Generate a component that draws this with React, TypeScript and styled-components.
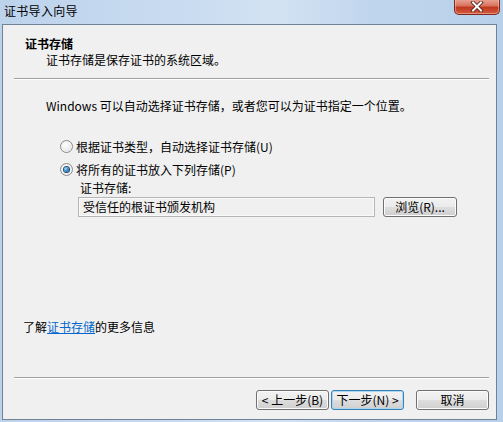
import styled, { createGlobalStyle } from 'styled-components';

const GlobalStyle = createGlobalStyle`
  html, body {
    margin: 0;
    padding: 0;
    background: #bcd3ec;
  }
  * {
    box-sizing: border-box;
  }
`;

const Window = styled.div`
  width: 503px;
  height: 422px;
  overflow: hidden;
  display: flex;
  flex-direction: column;
  padding: 0 6px 2px 2px;
  background: linear-gradient(to right, #bdd3ec 0%, #c8dbf0 35%, #d3e2f3 55%, #bfd5ed 75%, #b9d0ea 100%);
  font-family: 'Noto Sans CJK SC', 'Liberation Sans', sans-serif;
  font-size: 12px;
  color: #000;
`;

const TitleBar = styled.div`
  height: 24px;
  display: flex;
  align-items: flex-start;
  justify-content: space-between;
  margin-right: -3px;
`;

const Title = styled.div`
  padding: 3px 0 0 2px;
  line-height: 16px;
  letter-spacing: 0.3px;
`;

const CloseButton = styled.div`
  width: 46px;
  height: 16px;
  margin-top: -1px;
  border: 1px solid #7a2a1e;
  border-top: none;
  border-radius: 0 0 5px 5px;
  background: linear-gradient(to bottom, #e9a899 0%, #d8735d 45%, #c0391f 55%, #d35a3e 100%);
  box-shadow: inset 0 0 0 1px rgba(255, 210, 200, 0.45);
  display: flex;
  align-items: center;
  justify-content: center;
`;

const Client = styled.div`
  flex: 1;
  display: flex;
  flex-direction: column;
  background: #f0f0f0;
  border: 1px solid #6f8296;
`;

const Header = styled.div`
  height: 53px;
  padding: 11px 0 0 22px;
`;

const HeaderTitle = styled.div`
  font-weight: bold;
  line-height: 16px;
`;

const HeaderSub = styled.div`
  line-height: 16px;
  padding-left: 21px;
`;

const Separator = styled.div`
  height: 2px;
  margin: 0 7px 0 11px;
  border-top: 1px solid #a0a0a0;
  border-bottom: 1px solid #ffffff;
`;

const Body = styled.div`
  flex: 1;
  padding: 18px 0 0 43px;
  display: flex;
  flex-direction: column;
`;

const Intro = styled.div`
  line-height: 16px;
`;

const RadioGroup = styled.div`
  display: flex;
  flex-direction: column;
  gap: 3px;
  margin: 22px 0 0 14px;
`;

const RadioRow = styled.label`
  height: 20px;
  display: flex;
  align-items: center;
  gap: 3px;
`;

const RadioCircle = styled.span<{ $checked?: boolean }>`
  width: 13px;
  height: 13px;
  border-radius: 50%;
  border: 1px solid #8a8a8a;
  background: radial-gradient(circle at 40% 35%, #ffffff 0%, #f0f0f0 45%, #d0d0d0 100%);
  box-shadow: inset 0 0 0 1px #f4f4f4;
  display: flex;
  align-items: center;
  justify-content: center;

  &::after {
    content: '';
    display: ${(p) => (p.$checked ? 'block' : 'none')};
    width: 5px;
    height: 5px;
    border-radius: 50%;
    background: radial-gradient(circle at 35% 35%, #a9d9f5 0%, #2b7fc2 55%, #14446f 100%);
    box-shadow: 0 0 0 1px #1f4f7a;
  }
`;

const StoreBlock = styled.div`
  margin: 1px 0 0 32px;
  display: flex;
  flex-direction: column;
`;

const StoreLabel = styled.div`
  line-height: 16px;
  padding-left: 2px;
`;

const StoreRow = styled.div`
  display: flex;
  align-items: center;
  gap: 8px;
  margin-top: 1px;
`;

const StoreInput = styled.div`
  width: 297px;
  height: 20px;
  border: 1px solid #b5b5b5;
  box-shadow: inset 0 0 0 1px #fafafa;
  background: #f0f0f0;
  padding: 0 4px;
  line-height: 18px;
`;

const Button = styled.div<{ $width?: number; $focused?: boolean }>`
  width: ${(p) => p.$width ?? 73}px;
  height: 20px;
  border: 1px solid ${(p) => (p.$focused ? '#3c7fb1' : '#707070')};
  border-radius: 3px;
  background: linear-gradient(to bottom, #f2f2f2 0%, #ebebeb 48%, #dddddd 52%, #cfcfcf 100%);
  box-shadow: inset 0 0 0 1px ${(p) => (p.$focused ? '#a6d9f4' : '#fcfcfc')};
  display: flex;
  align-items: center;
  justify-content: center;
  line-height: 16px;
  white-space: nowrap;
`;

const MoreInfo = styled.div`
  line-height: 16px;
  padding-left: 20px;
  margin-bottom: 42px;
`;

const Link = styled.span`
  color: #0066cc;
  text-decoration: underline;
`;

const ButtonBar = styled.div`
  display: flex;
  justify-content: flex-end;
  align-items: center;
  padding: 11px 7px 9px 0;
`;

const NavGroup = styled.div`
  display: flex;
  gap: 2px;
  margin-right: 12px;
`;

const CloseIcon = () => (
  <svg width="14" height="11" viewBox="0 0 14 11">
    <path d="M3 1.5 L11 9.5 M11 1.5 L3 9.5" stroke="#4a1a12" strokeWidth="3.6" strokeLinecap="square" />
    <path d="M3 1.5 L11 9.5 M11 1.5 L3 9.5" stroke="#ffffff" strokeWidth="2" strokeLinecap="square" />
  </svg>
);

const App = () => {
  return (
    <>
      <GlobalStyle />
      <Window>
        <TitleBar>
          <Title>证书导入向导</Title>
          <CloseButton>
            <CloseIcon />
          </CloseButton>
        </TitleBar>
        <Client>
          <Header>
            <HeaderTitle>证书存储</HeaderTitle>
            <HeaderSub>证书存储是保存证书的系统区域。</HeaderSub>
          </Header>
          <Separator />
          <Body>
            <Intro>Windows 可以自动选择证书存储，或者您可以为证书指定一个位置。</Intro>
            <RadioGroup>
              <RadioRow>
                <RadioCircle />
                根据证书类型，自动选择证书存储(U)
              </RadioRow>
              <RadioRow>
                <RadioCircle $checked />
                将所有的证书放入下列存储(P)
              </RadioRow>
            </RadioGroup>
            <StoreBlock>
              <StoreLabel>证书存储:</StoreLabel>
              <StoreRow>
                <StoreInput>受信任的根证书颁发机构</StoreInput>
                <Button $width={74}>浏览(R)...</Button>
              </StoreRow>
            </StoreBlock>
          </Body>
          <MoreInfo>
            了解<Link>证书存储</Link>的更多信息
          </MoreInfo>
          <Separator />
          <ButtonBar>
            <NavGroup>
              <Button>&lt; 上一步(B)</Button>
              <Button $focused>下一步(N) &gt;</Button>
            </NavGroup>
            <Button>取消</Button>
          </ButtonBar>
        </Client>
      </Window>
    </>
  );
};

export default App;
